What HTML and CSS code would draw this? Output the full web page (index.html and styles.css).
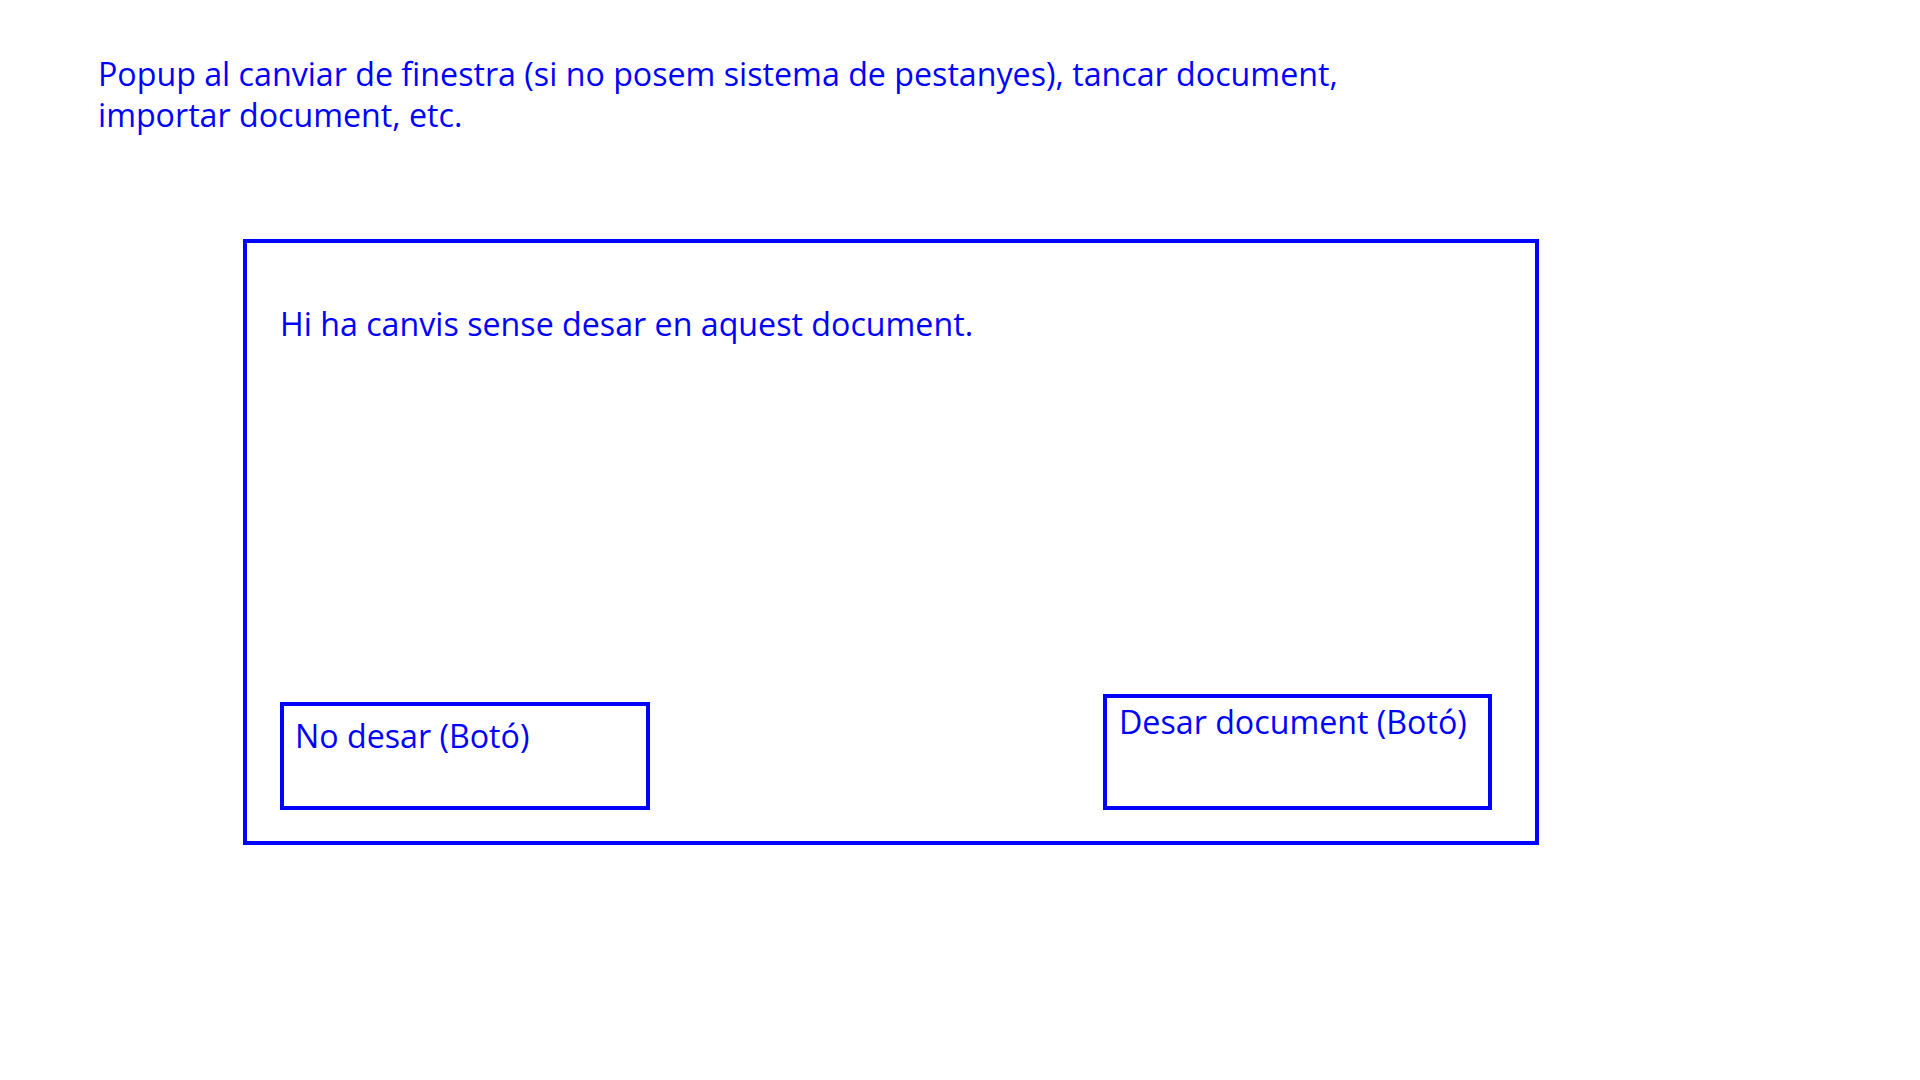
FILE: index.html
```html
<!DOCTYPE html>
<html lang="ca">
<head>
<meta charset="utf-8">
<title>Popup</title>
<link rel="stylesheet" href="styles.css">
</head>
<body>
<main class="page">
  <p class="note">Popup al canviar de finestra (si no posem sistema de pestanyes), tancar document,<br>importar document, etc.</p>
  <section class="dialog">
    <p class="message">Hi ha canvis sense desar en aquest document.</p>
    <div class="actions">
      <div class="btn btn-discard">No desar (Botó)</div>
      <div class="btn btn-save">Desar document (Botó)</div>
    </div>
  </section>
</main>
</body>
</html>
```
FILE: styles.css
```css
html, body {
  margin: 0;
  padding: 0;
  background: #ffffff;
}
body {
  font-family: "Open Sans", "Noto Sans", sans-serif;
  font-size: 32.2px;
  color: #0000ff;
}
.page {
  width: 1920px;
  height: 1080px;
  box-sizing: border-box;
  padding-top: 54px;
}
.note {
  margin: 0 0 0 98px;
  line-height: 40.8px;
}
.dialog {
  margin: 103px 0 0 243px;
  width: 1296px;
  height: 606px;
  box-sizing: border-box;
  border: 4px solid #0000ff;
  display: flex;
  flex-direction: column;
  justify-content: space-between;
  padding: 59px 43px 31px 33px;
}
.message {
  margin: 0;
}
.actions {
  display: flex;
  justify-content: space-between;
  align-items: flex-end;
}
.btn {
  box-sizing: border-box;
  border: 4px solid #0000ff;
}
.btn-discard {
  width: 370px;
  height: 108px;
  padding: 8px 0 0 11px;
}
.btn-save {
  width: 389px;
  height: 116px;
  padding: 2px 0 0 12px;
}
```
